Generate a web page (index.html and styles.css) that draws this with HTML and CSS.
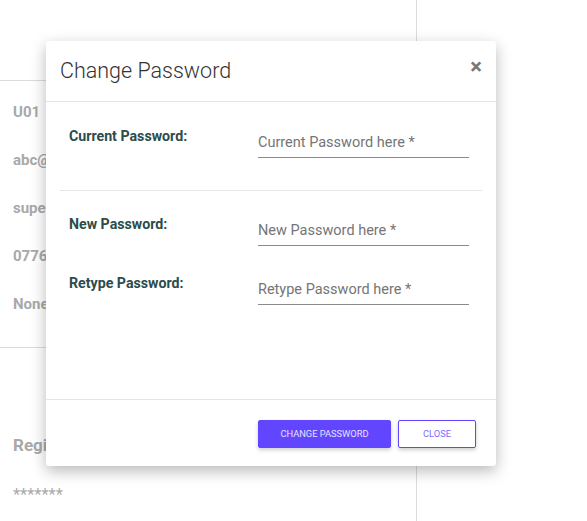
FILE: index.html
```html
<!DOCTYPE html>
<html>
<head>
<meta charset="utf-8">
<link rel="stylesheet" href="styles.css">
</head>
<body>
<div class="page">
  <div class="panel">
    <div class="panel-top"></div>
    <div class="info">
      <div class="info-row">U01</div>
      <div class="info-row">abc@gmail.com</div>
      <div class="info-row">superadmin</div>
      <div class="info-row">0776543210</div>
      <div class="info-row">None</div>
    </div>
    <div class="panel-bottom">
      <div class="reg-title">Registered Password</div>
      <div class="reg-value">*******</div>
    </div>
  </div>
</div>

<div class="modal">
  <div class="modal-header">
    <h4 class="modal-title">Change Password</h4>
    <span class="close">&times;</span>
  </div>
  <div class="modal-body">
    <div class="form-row first">
      <label class="label">Current Password:</label>
      <div class="field">Current Password here *</div>
    </div>
    <hr class="divider">
    <div class="form-row second">
      <label class="label">New Password:</label>
      <div class="field">New Password here *</div>
    </div>
    <div class="form-row third">
      <label class="label">Retype Password:</label>
      <div class="field">Retype Password here *</div>
    </div>
  </div>
  <div class="modal-footer">
    <button class="btn btn-primary">CHANGE PASSWORD</button>
    <button class="btn btn-outline">CLOSE</button>
  </div>
</div>
</body>
</html>
```
FILE: styles.css
```css
html, body {
  margin: 0;
  padding: 0;
  background: #fff;
  font-family: Roboto, "Liberation Sans", sans-serif;
}
.page {
  width: 587px;
  height: 521px;
  overflow: hidden;
  display: flex;
}
.panel {
  width: 416px;
  height: 521px;
  border-right: 1px solid #dcdcdc;
  display: flex;
  flex-direction: column;
}
.panel-top {
  height: 80px;
  border-bottom: 1px solid #dcdcdc;
}
.info {
  padding: 7px 0 0 13px;
  height: 259px;
  border-bottom: 1px solid #dcdcdc;
}
.info-row {
  height: 48px;
  line-height: 48px;
  font-size: 15px;
  font-weight: 700;
  color: #a9a9a9;
  white-space: nowrap;
}
.panel-bottom {
  padding: 85px 0 0 13px;
}
.reg-title {
  font-size: 17px;
  font-weight: 700;
  color: #a9a9a9;
  line-height: 24px;
}
.reg-value {
  margin-top: 28px;
  font-size: 16.5px;
  color: #a9a9a9;
  line-height: 20px;
}
.modal {
  position: absolute;
  left: 46px;
  top: 41px;
  width: 450px;
  height: 425px;
  background: #fff;
  border-radius: 3px;
  box-shadow: 0 5px 15px rgba(0, 0, 0, 0.28);
  display: flex;
  flex-direction: column;
}
.modal-header {
  border-bottom: 1px solid #e3e3e8;
  display: flex;
  align-items: center;
  justify-content: space-between;
  padding: 0 14px;
  box-sizing: border-box;
  height: 61px;
}
.modal-title {
  margin: 0;
  font-size: 21.5px;
  font-weight: 300;
  color: #333;
  margin-top: -2px;
}
.close {
  font-size: 22px;
  font-weight: 700;
  color: #777;
  line-height: 1;
  margin-top: -9px;
}
.modal-body {
  flex: 1;
  padding: 0 14px;
}
.form-row {
  display: grid;
  grid-template-columns: 189px 211px;
  padding-left: 9px;
  align-items: start;
}
.form-row.first { margin-top: 26px; }
.form-row.second { margin-top: 25px; }
.form-row.third { margin-top: 29px; }
.label {
  font-size: 14.2px;
  font-weight: 700;
  color: #2c4b4b;
  line-height: 17px;
}
.field {
  height: 29px;
  line-height: 30px;
  border-bottom: 1px solid #8a8a8a;
  font-size: 14.5px;
  color: #757575;
}
.divider {
  margin: 32px 0 0;
  border: 0;
  border-top: 1px solid #e6e6e6;
}
.modal-footer {
  height: 67px;
  box-sizing: border-box;
  border-top: 1px solid #e3e3e8;
  display: flex;
  justify-content: flex-end;
  align-items: flex-start;
  gap: 7px;
  padding: 20px 20px 0;
}
.btn {
  height: 28px;
  border-radius: 2px;
  font-family: Roboto, "Liberation Sans", sans-serif;
  font-size: 9.3px;
  line-height: 26px;
  padding: 0 0 1px;
  box-shadow: 0 2px 4px rgba(0, 0, 0, 0.2);
  cursor: pointer;
}
.btn-primary {
  width: 133px;
  background: #6246ff;
  border: 1px solid #6246ff;
  color: #e6e2ff;
}
.btn-outline {
  width: 78px;
  background: #fff;
  border: 1px solid #6246ff;
  color: #7a6bff;
}
```
